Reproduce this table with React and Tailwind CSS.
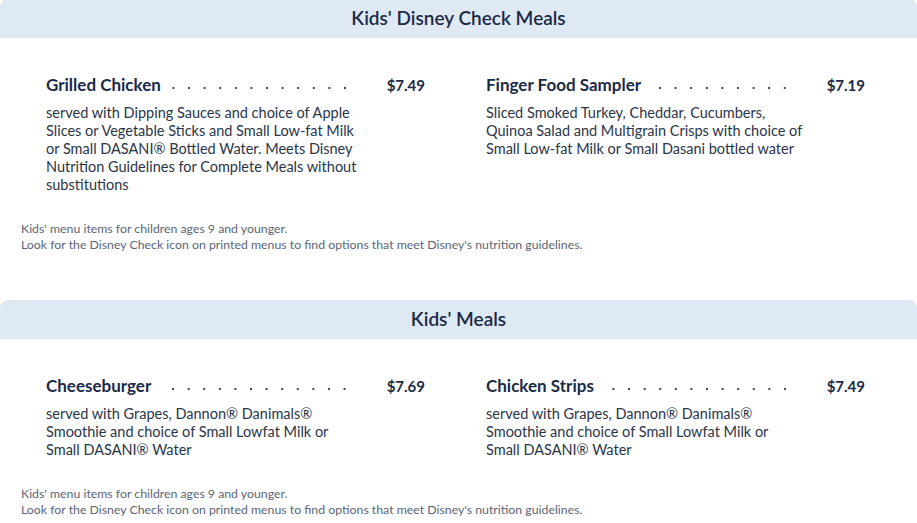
const sections = [
  {
    title: "Kids' Disney Check Meals",
    items: [
      {
        name: "Grilled Chicken",
        price: "$7.49",
        desc: "served with Dipping Sauces and choice of Apple Slices or Vegetable Sticks and Small Low-fat Milk or Small DASANI® Bottled Water. Meets Disney Nutrition Guidelines for Complete Meals without substitutions",
      },
      {
        name: "Finger Food Sampler",
        price: "$7.19",
        desc: "Sliced Smoked Turkey, Cheddar, Cucumbers, Quinoa Salad and Multigrain Crisps with choice of Small Low-fat Milk or Small Dasani bottled water",
      },
    ],
  },
  {
    title: "Kids' Meals",
    items: [
      {
        name: "Cheeseburger",
        price: "$7.69",
        desc: "served with Grapes, Dannon® Danimals® Smoothie and choice of Small Lowfat Milk or Small DASANI® Water",
      },
      {
        name: "Chicken Strips",
        price: "$7.49",
        desc: "served with Grapes, Dannon® Danimals® Smoothie and choice of Small Lowfat Milk or Small DASANI® Water",
      },
    ],
  },
];

function MenuItem({ item }) {
  return (
    <div>
      <div className="flex items-center h-[20px]">
        <span className="text-[17px] font-bold text-[#1b2a47] whitespace-nowrap">
          {item.name}
        </span>
        <span className="flex-1 h-[20px] ml-[10px] mr-[34px] mt-[6px] bg-[radial-gradient(circle,#3a465c_1.1px,transparent_1.5px)] bg-[length:15.6px_6px] bg-repeat-x bg-right" />
        <span className="text-[15px] font-bold text-[#1b2a47]">{item.price}</span>
      </div>
      <p className="mt-[9px] max-w-[318px] text-[14.5px] leading-[18px] text-[#2a3548]">
        {item.desc}
      </p>
    </div>
  );
}

export default function App() {
  return (
    <div className="bg-white min-h-screen font-['Lato',sans-serif]">
      {sections.map((s, i) => (
        <section key={s.title} className={i > 0 ? "mt-[47px]" : "-mt-[1px]"}>
          <div className="h-[39px] rounded-t-lg bg-[#dfe9f4] flex items-center justify-center">
            <h2 className="text-[19px] font-semibold text-[#1b2a47]">{s.title}</h2>
          </div>
          <div className="grid grid-cols-2 gap-x-[61px] pl-[46px] pr-[52px] pt-[37px]">
            {s.items.map((item) => (
              <MenuItem key={item.name} item={item} />
            ))}
          </div>
          <div className="mt-[27px] px-[21px] text-[12.3px] leading-[16px] text-[#5b6577]">
            <p>Kids' menu items for children ages 9 and younger.</p>
            <p>Look for the Disney Check icon on printed menus to find options that meet Disney's nutrition guidelines.</p>
          </div>
        </section>
      ))}
    </div>
  );
}
